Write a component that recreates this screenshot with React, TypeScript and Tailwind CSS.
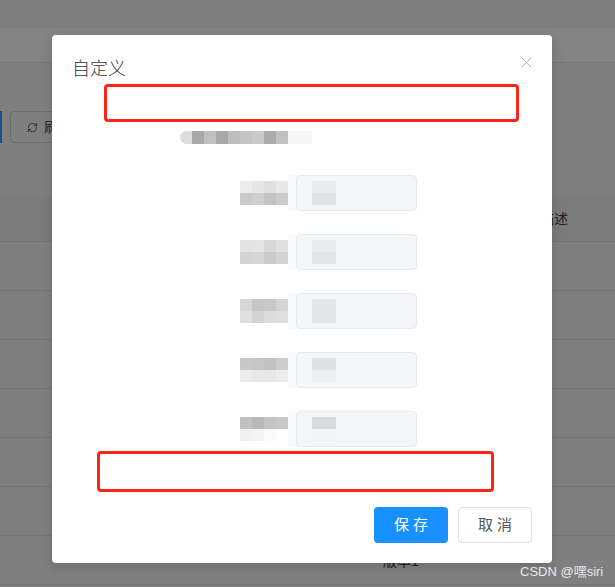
import { RefreshCw, X } from "lucide-react";

const blurRow = [
  "bg-[#dcdcdc] rounded-l-full",
  "bg-[#a8a8a8]",
  "bg-[#c0c0c0]",
  "bg-[#a9a9a9]",
  "bg-[#bebebe]",
  "bg-[#c4c4c4]",
  "bg-[#cacaca]",
  "bg-[#ababab]",
  "bg-[#c0c0c0]",
];

const fields = [
  {
    top: ["bg-[#ececec]", "bg-[#e6e6e6]", "bg-[#e0e0e0]", "bg-[#e8e8e8]"],
    bottom: ["bg-[#cacaca]", "bg-[#cfcfcf]", "bg-[#c3c3c3]", "bg-[#cccccc]"],
    inner: ["bg-[#e9eaee]", "bg-[#e1e2e6]"],
  },
  {
    top: ["bg-[#e3e3e3]", "bg-[#e4e4e4]", "bg-[#d8d8d8]", "bg-[#e0e0e0]"],
    bottom: ["bg-[#d3d3d3]", "bg-[#d5d5d5]", "bg-[#cbcbcb]", "bg-[#d3d3d3]"],
    inner: ["bg-[#e9eaee]", "bg-[#e4e5e9]"],
  },
  {
    top: ["bg-[#d8d8d8]", "bg-[#c6c6c6]", "bg-[#c8c8c8]", "bg-[#d5d5d5]"],
    bottom: ["bg-[#e0e0e0]", "bg-[#d3d3d3]", "bg-[#dcdcdc]", "bg-[#dedede]"],
    inner: ["bg-[#e4e5e9]", "bg-[#e4e5e9]"],
  },
  {
    top: ["bg-[#c8c8c8]", "bg-[#c6c6c6]", "bg-[#c2c2c2]", "bg-[#cdcdcd]"],
    bottom: ["bg-[#ececec]", "bg-[#e8e8e8]", "bg-[#e8e8e8]", "bg-[#ececec]"],
    inner: ["bg-[#dfe0e4]", "bg-[#eceef1]"],
  },
  {
    top: ["bg-[#c1c1c1]", "bg-[#b8b8b8]", "bg-[#c4c4c4]", "bg-[#c8c8c8]"],
    bottom: ["bg-[#f0f0f0]", "bg-[#f3f3f3]", "bg-[#fbfbfb]", "bg-white"],
    inner: ["bg-[#d8d9dd]", "bg-[#f3f4f7]"],
  },
];

function FieldRow({ field }: { field: (typeof fields)[number] }) {
  return (
    <div className="ml-[168px] flex h-[36px] items-center">
      <div className="flex w-[48px] flex-col">
        <div className="flex">
          {field.top.map((c, i) => (
            <div key={i} className={`h-[12px] w-[12px] ${c}`} />
          ))}
        </div>
        <div className="flex">
          {field.bottom.map((c, i) => (
            <div key={i} className={`h-[12px] w-[12px] ${c}`} />
          ))}
        </div>
      </div>
      <div className="h-full w-[8px] bg-[#f9fafc]" />
      <div className="flex h-full w-[121px] items-center rounded-[4px] border border-[#e6e9f0] bg-[#f5f6fa] pl-[15px]">
        <div className="flex flex-col">
          <div className={`h-[12px] w-[24px] ${field.inner[0]}`} />
          <div className={`h-[12px] w-[24px] ${field.inner[1]}`} />
        </div>
      </div>
    </div>
  );
}

function Background() {
  return (
    <div className="flex h-[587px] w-[615px] flex-col bg-[#7f7f7f]">
      <div className="h-[28px] bg-[#7e7e7e]" />
      <div className="h-[35px] border-b border-[#767676] bg-[#838383]" />
      <div className="flex h-[134px] items-start gap-[8px] pt-[48px]">
        <div className="h-[32px] w-[2px] bg-[#15528f]" />
        <div className="flex h-[32px] w-[72px] items-center gap-[6px] rounded-[4px] border border-[#6c6c6c] pl-[16px] text-[14px] text-[#2b2b2b]">
          <RefreshCw size={11} strokeWidth={2} />
          <span>刷新</span>
        </div>
      </div>
      <div className="flex h-[45px] items-center border-b border-[#717478] bg-[#7b7b7b] pl-[540px] text-[14px] text-[#1f1f1f]">
        描述
      </div>
      {Array.from({ length: 7 }).map((_, i) => (
        <div key={i} className="h-[49px] border-b border-[#717478]" />
      ))}
    </div>
  );
}

export default function App() {
  return (
    <div
      className="relative h-[587px] w-[615px] overflow-hidden"
      style={{ fontFamily: '"Liberation Sans", "Noto Sans CJK SC", sans-serif' }}
    >
      <Background />
      <div className="absolute left-[383px] top-[551px] text-[14px] text-[#1f1f1f]">版本1</div>
      <div className="absolute left-[52px] top-[35px] flex w-[500px] flex-col rounded-[4px] bg-white px-[20px] pb-[20px] pt-[22px] shadow-[0_4px_12px_rgba(0,0,0,0.15)]">
        <div className="flex h-[24px] items-center justify-between">
          <span className="text-[18px] font-light leading-[24px] text-[#333333]">自定义</span>
          <X size={17} strokeWidth={1.1} className="mr-[-3px] mt-[-14px] text-[#a0a0a0]" />
        </div>
        <div className="ml-[32px] mt-[3px] h-[38px] w-[415px] rounded-[4px] border-[3px] border-[#ff2418]" />
        <div className="ml-[108px] mt-[9px] flex h-[13px]">
          {blurRow.map((c, i) => (
            <div key={i} className={`h-full w-[12px] ${c}`} />
          ))}
          <div className="h-full w-[24px] bg-[#f7f7f7]" />
        </div>
        <div className="mt-[31px] flex flex-col gap-[23px]">
          {fields.map((f, i) => (
            <FieldRow key={i} field={f} />
          ))}
        </div>
        <div className="ml-[25px] mt-[4px] h-[41px] w-[397px] rounded-[4px] border-[3px] border-[#ff2418]" />
        <div className="mt-[15px] flex justify-end gap-[10px]">
          <button className="flex h-[36px] w-[74px] items-center justify-center rounded-[4px] bg-[#1890ff] pl-[4px] text-[15px] tracking-[4px] text-white">
            保存
          </button>
          <button className="flex h-[36px] w-[74px] items-center justify-center rounded-[4px] border border-[#dcdfe6] bg-white pl-[4px] text-[15px] tracking-[4px] text-[#555]">
            取消
          </button>
        </div>
      </div>
      <div className="absolute left-[520px] top-[562px] text-[13px] text-[#e8e8e8]">CSDN @嘿siri</div>
    </div>
  );
}
